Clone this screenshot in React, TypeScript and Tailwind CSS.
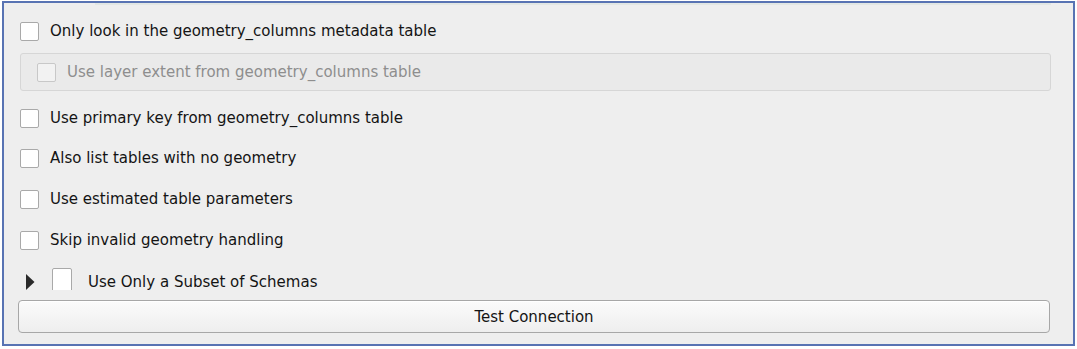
import React from 'react'

const font = { fontFamily: '"DejaVu Sans", Verdana, sans-serif' }

function Box({ disabled = false }: { disabled?: boolean }) {
  return (
    <span
      className={`block w-[19px] h-[19px] shrink-0 rounded-[2px] border ${
        disabled ? 'border-[#c8c8c8] bg-[#f2f2f2]' : 'border-[#a9a9a9] bg-white'
      }`}
    />
  )
}

function Row({ label, h }: { label: string; h: string }) {
  return (
    <div className={`flex items-center gap-[11px] ${h}`}>
      <Box />
      <span className="text-[15px] text-[#141414] whitespace-nowrap">{label}</span>
    </div>
  )
}

export default function App() {
  return (
    <div className="w-[1077px] h-[349px] bg-white overflow-hidden" style={font}>
      <div className="ml-[2px] mt-[1px] w-[1073px] h-[345px] border-2 border-[#5873b3] bg-[#eeeeee] flex flex-col">
        {/* bottom edge of the widget above */}
        <div className="h-[2px] ml-[91px] mr-[22px] bg-[#e2e7e4]" />
        <div className="pl-[16px] pr-[22px] pt-[6px] flex flex-col">
          <Row label="Only look in the geometry_columns metadata table" h="h-10" />
          <div className="mt-[2px] h-[38px] rounded-[3px] border border-[#d6d6d6] bg-[#eaeaea] flex items-center gap-[11px] pl-[16px]">
            <Box disabled />
            <span className="text-[15px] text-[#8e8e8e] whitespace-nowrap">Use layer extent from geometry_columns table</span>
          </div>
          <div className="mt-[7px]">
            <Row label="Use primary key from geometry_columns table" h="h-10" />
            <Row label="Also list tables with no geometry" h="h-[41px]" />
            <Row label="Use estimated table parameters" h="h-[41px]" />
            <Row label="Skip invalid geometry handling" h="h-[41px]" />
          </div>
          <div className="h-[29px] overflow-hidden flex items-start pt-[7px] gap-[17px] pl-[5px]">
            <svg width="10" height="16" viewBox="0 0 10 16" className="mt-[6px] shrink-0">
              <path d="M1 0 L9.5 8 L1 16 Z" fill="#2a2a2a" />
            </svg>
            <div className="flex items-start gap-[16px]">
              <span className="block w-[20px] h-[24px] shrink-0 rounded-[2px] border border-[#a9a9a9] bg-white" />
              <span className="text-[15px] text-[#141414] whitespace-nowrap mt-[3px]">Use Only a Subset of Schemas</span>
            </div>
          </div>
          <button className="mt-[10px] -ml-[2px] w-[1032px] h-[33px] pt-[2px] rounded-[4px] border border-[#a7a7a7] bg-gradient-to-b from-[#fbfbfb] to-[#eeeeee] text-[15px] text-[#141414] shadow-[inset_0_1px_0_#ffffff]">
            Test Connection
          </button>
        </div>
      </div>
    </div>
  )
}
